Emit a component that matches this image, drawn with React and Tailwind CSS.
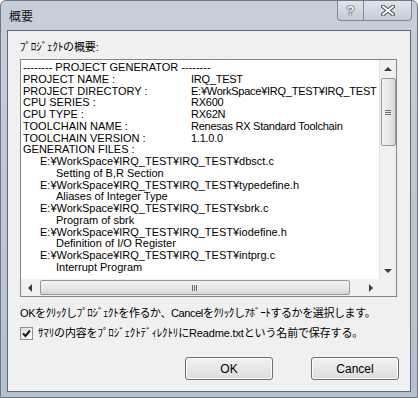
import React from "react";

const jp = "font-['Liberation_Sans','Noto_Sans_CJK_JP',sans-serif]";

const lines = [
  { a: "-------- PROJECT GENERATOR --------" },
  { a: "PROJECT NAME :", b: "IRQ_TEST" },
  { a: "PROJECT DIRECTORY :", b: "E:¥WorkSpace¥IRQ_TEST¥IRQ_TEST" },
  { a: "CPU SERIES :", b: "RX600" },
  { a: "CPU TYPE :", b: "RX62N" },
  { a: "TOOLCHAIN NAME :", b: "Renesas RX Standard Toolchain" },
  { a: "TOOLCHAIN VERSION :", b: "1.1.0.0" },
  { a: "GENERATION FILES :" },
  { a: "E:¥WorkSpace¥IRQ_TEST¥IRQ_TEST¥dbsct.c", i: 1 },
  { a: "Setting of B,R Section", i: 2 },
  { a: "E:¥WorkSpace¥IRQ_TEST¥IRQ_TEST¥typedefine.h", i: 1 },
  { a: "Aliases of Integer Type", i: 2 },
  { a: "E:¥WorkSpace¥IRQ_TEST¥IRQ_TEST¥sbrk.c", i: 1 },
  { a: "Program of sbrk", i: 2 },
  { a: "E:¥WorkSpace¥IRQ_TEST¥IRQ_TEST¥iodefine.h", i: 1 },
  { a: "Definition of I/O Register", i: 2 },
  { a: "E:¥WorkSpace¥IRQ_TEST¥IRQ_TEST¥intprg.c", i: 1 },
  { a: "Interrupt Program", i: 2 },
];

const Arrow = ({ dir }) => {
  const pts = {
    up: "0,4 4,0 8,4",
    down: "0,0 8,0 4,4",
    left: "4,0 4,8 0,4",
    right: "0,0 0,8 4,4",
  }[dir];
  const vert = dir === "up" || dir === "down";
  return (
    <svg width={vert ? 8 : 4} height={vert ? 4 : 8} viewBox={vert ? "0 0 8 4" : "0 0 4 8"}>
      <polygon points={pts} fill="#3c3c3c" />
    </svg>
  );
};

const Summary = () => (
  <div className="w-[377px] h-[238px] border border-[#828790] bg-white flex flex-col">
    <div className="flex flex-1 min-h-0">
      <div className="flex-1 overflow-hidden pt-[2px] pl-[2px] font-['Liberation_Sans',sans-serif] text-[11px] leading-[11.75px] text-black whitespace-nowrap">
        {lines.map((l, k) => (
          <div
            key={k}
            className={
              l.b
                ? "grid grid-cols-[168px_1fr]"
                : l.i === 1
                ? "pl-[17px]"
                : l.i === 2
                ? "pl-[33px]"
                : ""
            }
          >
            <span>{l.a}</span>
            {l.b && <span className="tracking-[-0.25px]">{l.b}</span>}
          </div>
        ))}
      </div>
      {/* vertical scrollbar */}
      <div className="w-[17px] shrink-0 bg-[#f0f0f0] border-l border-[#e3e3e3] flex flex-col items-center">
        <div className="h-[18px] flex items-center justify-center">
          <Arrow dir="up" />
        </div>
        <div className="w-[15px] h-[68px] rounded-[2px] border border-[#979797] bg-gradient-to-r from-[#f3f3f3] via-[#e8e8e8] to-[#d6d6d6] flex flex-col items-center justify-center gap-[1px]">
          <div className="w-[6px] h-px bg-[#6e6e6e]" />
          <div className="w-[6px] h-px bg-[#6e6e6e]" />
          <div className="w-[6px] h-px bg-[#6e6e6e]" />
        </div>
        <div className="flex-1" />
        <div className="h-[17px] flex items-center justify-center">
          <Arrow dir="down" />
        </div>
      </div>
    </div>
    {/* horizontal scrollbar */}
    <div className="h-[17px] shrink-0 flex bg-[#f0f0f0]">
      <div className="w-[18px] flex items-center justify-center">
        <Arrow dir="left" />
      </div>
      <div className="flex-1 flex items-center pl-[1px] pr-[13px]">
        <div className="w-[310px] h-[15px] rounded-[2px] border border-[#979797] bg-gradient-to-b from-[#f3f3f3] via-[#e8e8e8] to-[#d6d6d6] flex items-center justify-center gap-[1px]">
          <div className="w-px h-[6px] bg-[#6e6e6e]" />
          <div className="w-px h-[6px] bg-[#6e6e6e]" />
          <div className="w-px h-[6px] bg-[#6e6e6e]" />
        </div>
      </div>
      <div className="w-[17px] flex items-center justify-center">
        <Arrow dir="right" />
      </div>
      <div className="w-[17px] bg-[#f0f0f0]" />
    </div>
  </div>
);

const Button = ({ children }) => (
  <button className="w-[88px] h-[23px] rounded-[3px] border border-[#707070] bg-gradient-to-b from-[#f2f2f2] to-[#dcdcdc] text-[12px] text-black leading-none shadow-[inset_0_0_0_1px_#fbfbfb]">
    {children}
  </button>
);

export default function App() {
  return (
    <div className={`w-[418px] h-[398px] bg-gradient-to-b from-[#c6cfda] to-[#b5c1ce] border border-[#6e7884] rounded-t-[6px] flex flex-col ${jp}`}>
      {/* Title bar */}
      <div className="h-[29px] flex justify-between">
        <div className="pl-[8px] pt-[7px] text-[12px] text-[#111]">概要</div>
        <div className="flex self-start mr-[5px] h-[20px]">
          <div className="w-[27px] border border-t-0 border-[#7d8a98] rounded-bl-[4px] bg-gradient-to-b from-[#dfe5ec] to-[#c3ccd6] flex items-center justify-center text-white font-bold text-[13px] [text-shadow:0_0_1px_#333,0_0_1px_#333,0_0_2px_#555]">
            ?
          </div>
          <div className="w-[48px] border border-l-0 border-t-0 border-[#7d8a98] rounded-br-[4px] bg-gradient-to-b from-[#dfe5ec] to-[#c3ccd6] flex items-center justify-center">
            <svg width="14" height="11" viewBox="0 0 14 11">
              <path d="M2 1.5 L12 9.5 M12 1.5 L2 9.5" stroke="#4a5562" strokeWidth="4" strokeLinecap="round" />
              <path d="M2 1.5 L12 9.5 M12 1.5 L2 9.5" stroke="#ffffff" strokeWidth="2" strokeLinecap="round" />
            </svg>
          </div>
        </div>
      </div>
      {/* Client area */}
      <div className="mx-[6px] mb-[5px] flex-1 border border-[#5f6a76] bg-[#f0f0f0] flex flex-col pl-[12px] pr-[11px] text-[11px] leading-[16px] text-black whitespace-nowrap">
        <div className="mt-[8px] tracking-[-0.15px]">ﾌﾟﾛｼﾞｪｸﾄの概要:</div>
        <div className="mt-[4px]">
          <Summary />
        </div>
        <div className="mt-[8px] tracking-[-0.4px]">
          OKをｸﾘｯｸしﾌﾟﾛｼﾞｪｸﾄを作るか、Cancelをｸﾘｯｸしｱﾎﾞｰﾄするかを選択します。
        </div>
        <div className="mt-[4px] flex items-center">
          <div className="w-[13px] h-[13px] shrink-0 border border-[#8e8f8f] bg-gradient-to-br from-[#dcdcdc] to-white flex items-center justify-center">
            <svg width="9" height="9" viewBox="0 0 9 9">
              <path d="M1 4.5 L3.5 7 L8 1.5" stroke="#1a1a1a" strokeWidth="2" fill="none" />
            </svg>
          </div>
          <span className="ml-[5px] tracking-[-0.15px]">
            ｻﾏﾘの内容をﾌﾟﾛｼﾞｪｸﾄﾃﾞｨﾚｸﾄﾘにReadme.txtという名前で保存する。
          </span>
        </div>
        <div className="mt-[16px] flex justify-end gap-[38px]">
          <Button>OK</Button>
          <Button>Cancel</Button>
        </div>
      </div>
    </div>
  );
}
